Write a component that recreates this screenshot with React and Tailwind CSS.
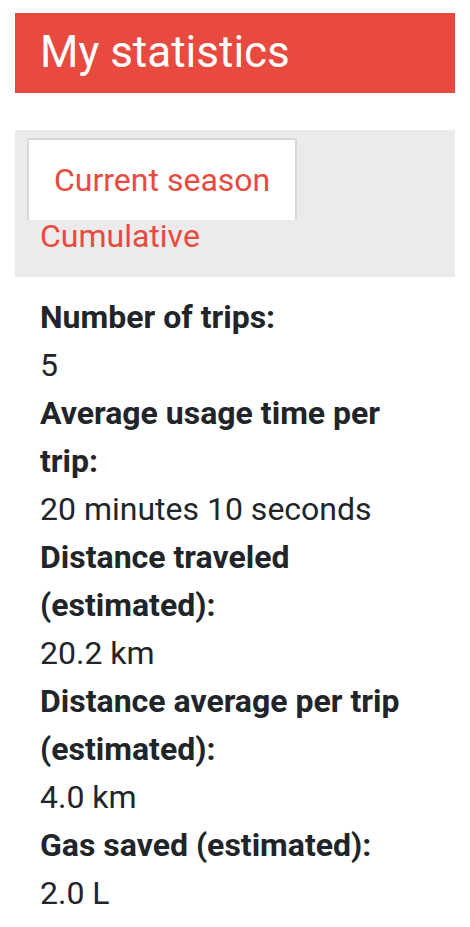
export default function App() {
  const stats = [
    ["Number of trips:", "5"],
    ["Average usage time per trip:", "20 minutes 10 seconds"],
    ["Distance traveled (estimated):", "20.2 km"],
    ["Distance average per trip (estimated):", "4.0 km"],
    ["Gas saved (estimated):", "2.0 L"],
  ];
  return (
    <div
      className="min-h-[927px] w-[470px] bg-white px-[15px] pt-[13px] text-[#212529]"
      style={{ fontFamily: "Roboto, 'Noto Sans', sans-serif" }}
    >
      <div className="flex h-[80px] items-center bg-[#e84a3f] pb-[2px] pl-[25px]">
        <h1 className="text-[44px] font-normal leading-[52px] text-white">My statistics</h1>
      </div>
      <div className="mt-[37px] bg-[#ebebeb] pb-[25px] pl-[12px] pt-[8px]">
        <div className="inline-flex border-l-2 border-r-2 border-t-2 border-[#d8d8d8] bg-white px-[25px] py-[16px]">
          <span className="text-[32px] leading-[48px] text-[#e84a3f]">Current season</span>
        </div>
        <div className="ml-[13px] text-[32px] leading-[32px] text-[#e84a3f]">Cumulative</div>
      </div>
      <div className="mt-[16px] px-[25px] text-[32px] leading-[48px]">
        {stats.map(([label, value]) => (
          <div key={label}>
            <div className="font-bold">{label}</div>
            <div className="font-normal">{value}</div>
          </div>
        ))}
      </div>
    </div>
  );
}
